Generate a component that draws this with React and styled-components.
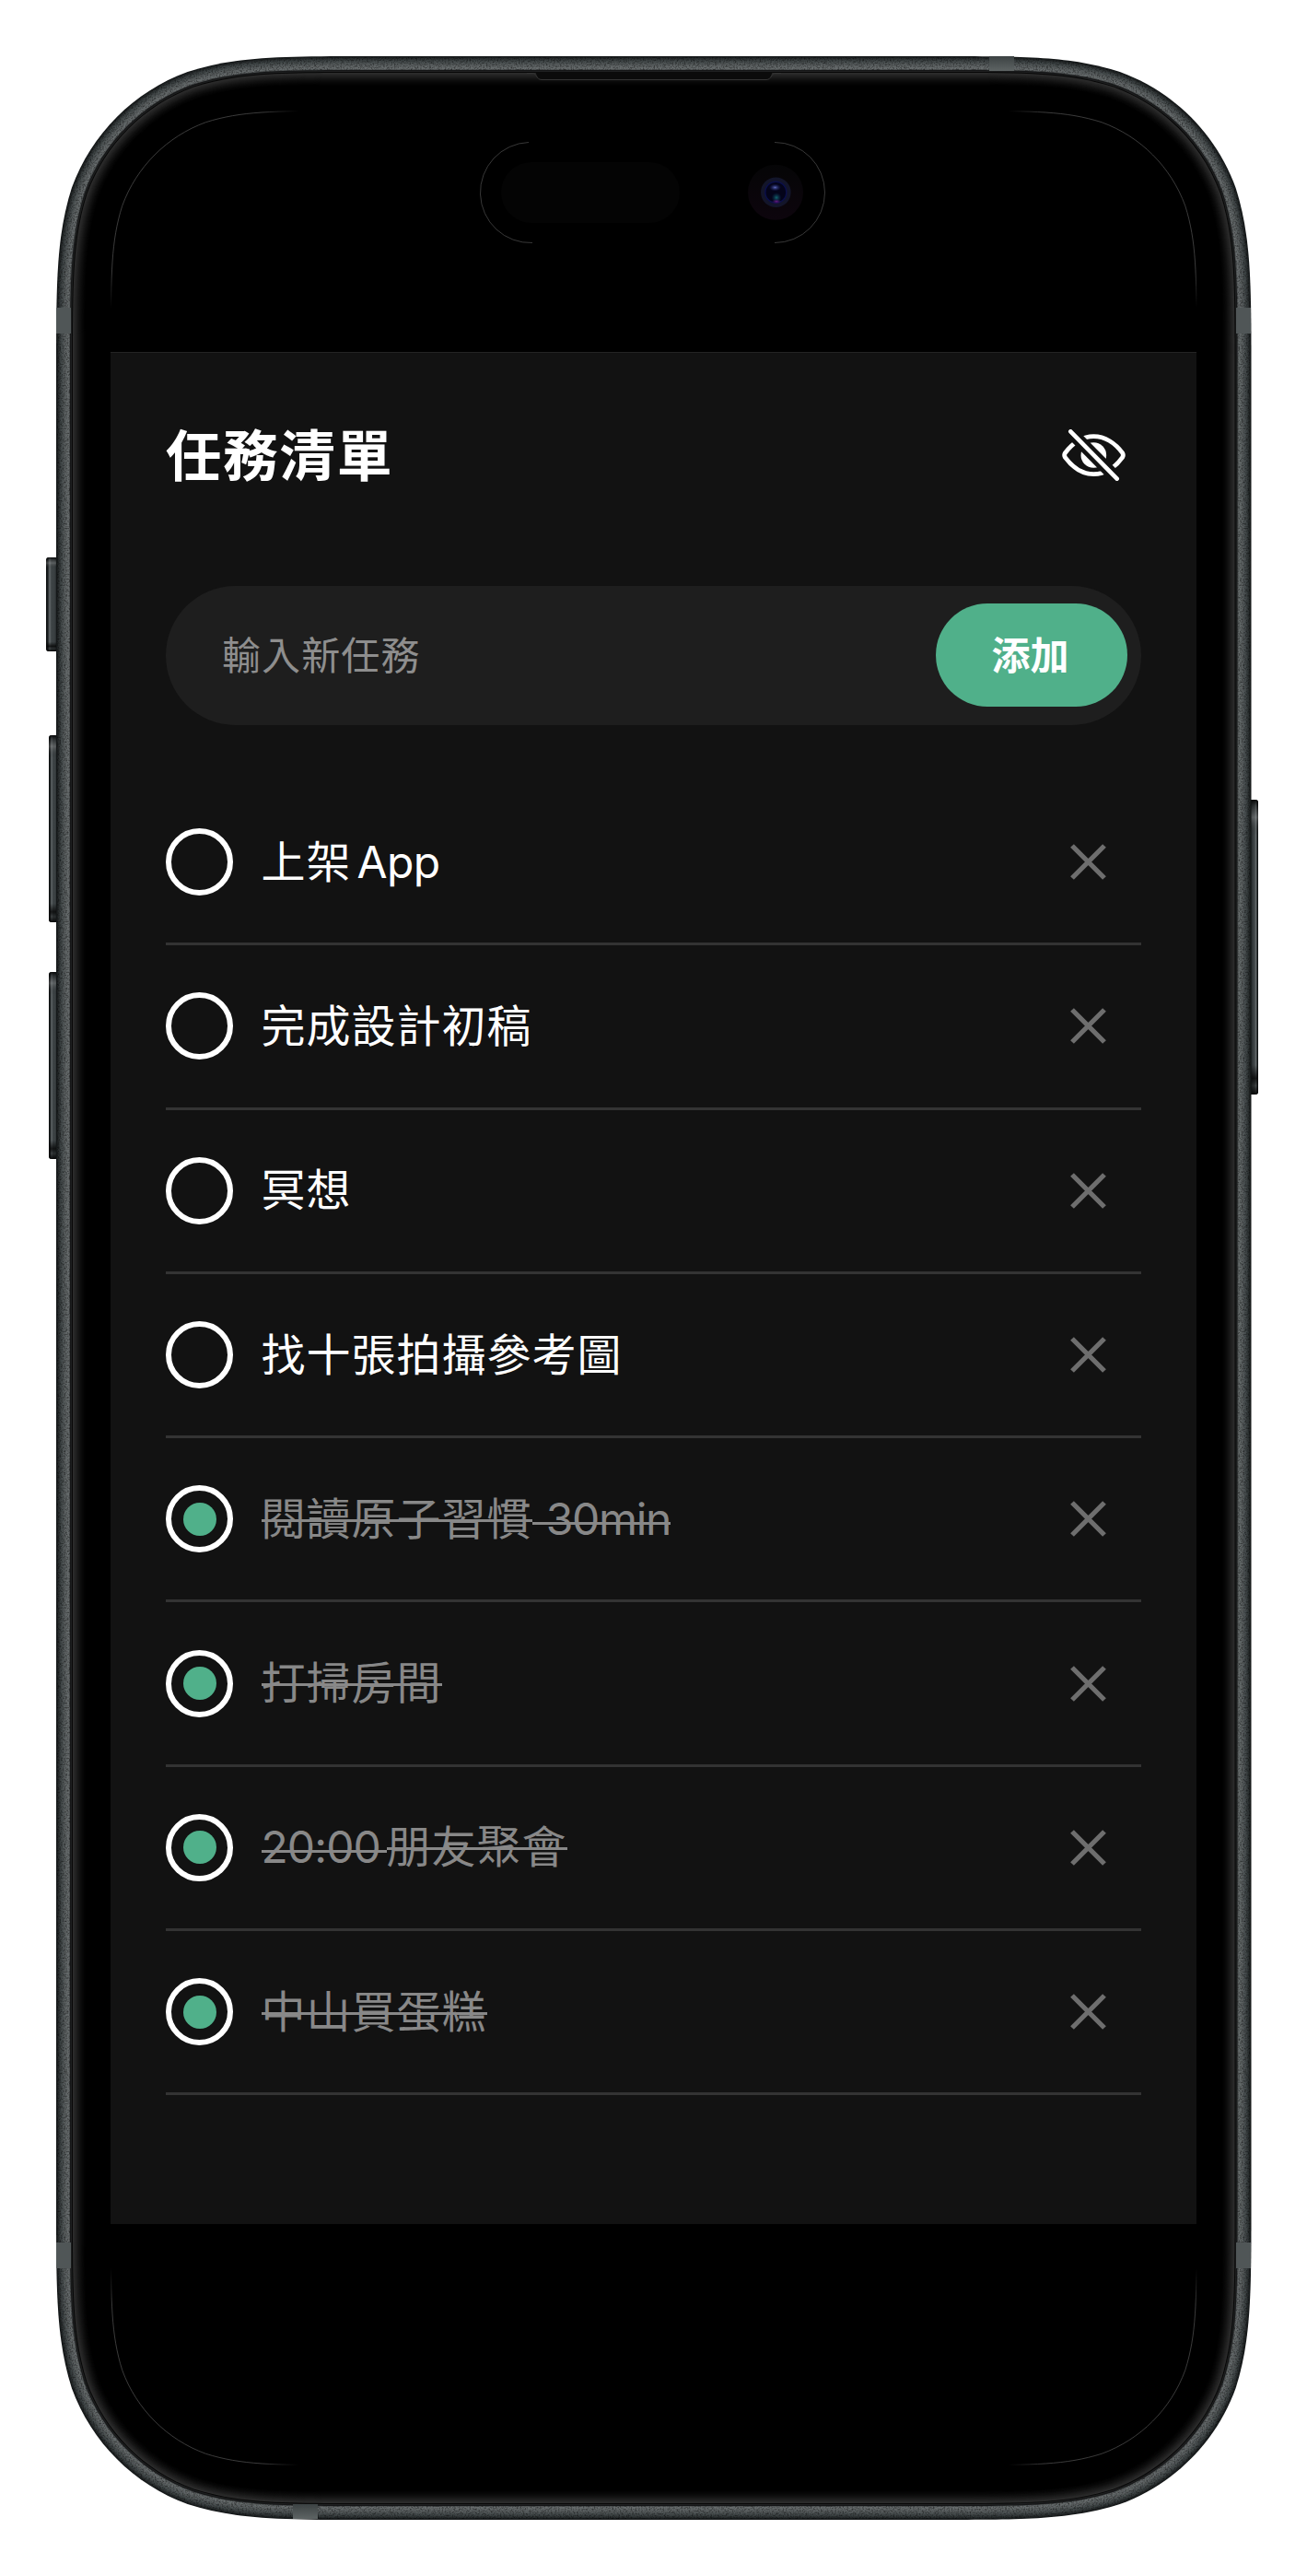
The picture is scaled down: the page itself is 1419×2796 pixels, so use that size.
import React, { useState } from "react";
import styled, { createGlobalStyle } from "styled-components";

const GlobalStyle = createGlobalStyle`
  *, *::before, *::after { box-sizing: border-box; }
  body { margin: 0; background: #fff; }
`;

const cjk = `"Noto Sans CJK TC", "Noto Sans CJK SC", sans-serif`;

/* ---------- page ---------- */

const Page = styled.main`
  position: relative;
  width: 1419px;
  height: 2796px;
  padding: 382px 120px;
  overflow: hidden;
  background: #fff;
  font-family: Inter, ${cjk};
`;

const DeviceArt = styled.svg`
  position: absolute;
  inset: 0;
  display: block;
`;

const Screen = styled.section`
  position: relative;
  display: flex;
  flex-direction: column;
  width: 1179px;
  height: 2032px;
  padding: 0 60px;
  background: #121212;
  box-shadow: inset 0 1px 0 #242424;
`;

const Header = styled.header`
  display: flex;
  align-items: center;
  justify-content: space-between;
  height: 224px;
  margin-bottom: 30px;
  padding-right: 17px;
`;

const Title = styled.h1`
  margin: 0;
  padding-bottom: 6px;
  font: 600 60px/88px ${cjk};
  letter-spacing: 1.9px;
  color: #fff;
`;

const IconButton = styled.button`
  display: flex;
  padding: 0;
  border: 0;
  background: none;
  cursor: pointer;
`;

const Composer = styled.div`
  display: flex;
  align-items: center;
  justify-content: space-between;
  height: 151px;
  margin-bottom: 61px;
  padding: 0 15px 0 61px;
  border-radius: 76px;
  background: #1e1e1e;
`;

const Placeholder = styled.span`
  padding-bottom: 5px;
  font: 400 42px/60px ${cjk};
  letter-spacing: 1.1px;
  color: #8e8e8e;
`;

const AddButton = styled.button`
  width: 208px;
  height: 112px;
  margin-bottom: 1px;
  padding: 0 3px 5px 0;
  border: 0;
  border-radius: 56px;
  background: #50b08a;
  color: #fff;
  font: 600 42px/60px ${cjk};
  cursor: pointer;
`;

const List = styled.ul`
  margin: 0;
  padding: 0;
  list-style: none;
`;

const Row = styled.li`
  display: flex;
  align-items: center;
  height: 178.3px;
  padding-right: 38px;
  border-bottom: 3px solid #333;
`;

const Radio = styled.button`
  display: flex;
  align-items: center;
  justify-content: center;
  width: 73px;
  height: 73px;
  padding: 0;
  border: 6px solid #fff;
  border-radius: 50%;
  background: none;
  cursor: pointer;
`;

const Dot = styled.span`
  width: 36px;
  height: 36px;
  border-radius: 50%;
  background: #50b08a;
`;

const Label = styled.span`
  flex: 1;
  margin-left: 30.5px;
  padding-bottom: 4px;
  line-height: 70px;
  font-size: 48px;
  white-space: pre;
  color: ${(p) => (p.$done ? "#888" : "#fff")};
`;

const Run = styled.span`
  position: relative;
  font-family: ${(p) => (p.$latin ? `Inter, ${cjk}` : cjk)};
  letter-spacing: ${(p) => p.$tracking ?? 1}px;
  word-spacing: ${(p) => p.$gap ?? 0}px;
`;

const StruckRun = styled(Run)`
  &::after {
    content: "";
    position: absolute;
    left: 0;
    right: 0;
    bottom: ${(p) => (p.$latin ? "23px" : "28px")};
    height: 3px;
    background: #888;
  }
`;

/* ---------- icons ---------- */

const EyeOff = () => (
  <svg width="69" height="56" viewBox="398 1247 207 168" fill="none">
    <mask id="eyeGap" maskUnits="userSpaceOnUse" x="390" y="1240" width="225" height="190">
      <rect x="390" y="1240" width="225" height="190" fill="#fff" />
      <path d="M386 1215L626 1457" stroke="#000" strokeWidth="41" />
    </mask>
    <g mask="url(#eyeGap)">
      <path
        d="M408 1324C432 1293 464 1270 501 1270C538 1270 572 1293 595 1324Q599 1331 595 1338C572 1370 538 1393 501 1393C464 1393 432 1370 408 1338Q404 1331 408 1324Z"
        stroke="#fff"
        strokeWidth="14.5"
      />
      <circle cx="501" cy="1331" r="41.5" fill="#fff" />
    </g>
    <path d="M426 1254L577 1408" stroke="#fff" strokeWidth="14" strokeLinecap="round" />
  </svg>
);

const Cross = () => (
  <svg width="39" height="39" viewBox="0 0 39 39" stroke="#6e6e6e" strokeWidth="5.3">
    <path d="M2 2L37 37M37 2L2 37" />
  </svg>
);

/* ---------- device ---------- */

const W = 1297.5;
const H = 2674;

// Rounded rectangle with continuous curvature, inset from the outer body edge.
const body = (inset, radius = 226 - inset) => {
  const x0 = 61 + inset;
  const y0 = 61 + inset;
  const x1 = 61 + W - inset;
  const y1 = 61 + H - inset;
  const [a, b, c, d, e, f, g] = [1.528665, 1.08849, 0.868407, 0.631494, 0.372824, 0.16906, 0.074911].map(
    (k) => k * radius
  );
  return [
    `M${x0 + a} ${y0}L${x1 - a} ${y0}`,
    `C${x1 - b} ${y0} ${x1 - c} ${y0} ${x1 - d} ${y0 + g}`,
    `C${x1 - e} ${y0 + f} ${x1 - f} ${y0 + e} ${x1 - g} ${y0 + d}`,
    `C${x1} ${y0 + c} ${x1} ${y0 + b} ${x1} ${y0 + a}L${x1} ${y1 - a}`,
    `C${x1} ${y1 - b} ${x1} ${y1 - c} ${x1 - g} ${y1 - d}`,
    `C${x1 - f} ${y1 - e} ${x1 - e} ${y1 - f} ${x1 - d} ${y1 - g}`,
    `C${x1 - c} ${y1} ${x1 - b} ${y1} ${x1 - a} ${y1}L${x0 + a} ${y1}`,
    `C${x0 + b} ${y1} ${x0 + c} ${y1} ${x0 + d} ${y1 - g}`,
    `C${x0 + e} ${y1 - f} ${x0 + f} ${y1 - e} ${x0 + g} ${y1 - d}`,
    `C${x0} ${y1 - c} ${x0} ${y1 - b} ${x0} ${y1 - a}L${x0} ${y0 + a}`,
    `C${x0} ${y0 + b} ${x0} ${y0 + c} ${x0 + g} ${y0 + d}`,
    `C${x0 + f} ${y0 + e} ${x0 + e} ${y0 + f} ${x0 + d} ${y0 + g}`,
    `C${x0 + c} ${y0} ${x0 + b} ${y0} ${x0 + a} ${y0}Z`,
  ].join("");
};

const rail = [
  "#151819", "#1e2223", "#282c2d", "#313637", "#393f40", "#404647", "#474d4e", "#4d5354",
  "#535859", "#585d5e", "#5d6263", "#616667", "#656a6b", "#676c6d", "#505455", "#151617",
  "#1f2021", "#070707",
];
const glow = [
  "#2c2c2c", "#282828", "#242424", "#202020", "#1c1c1c", "#181818", "#141414", "#101010",
  "#0d0d0d", "#0a0a0a", "#070707", "#050505", "#030303", "#010101", "#000",
];

const bands = [
  [61, 334, 16, 28], [1342, 334, 16, 28], [61, 2434, 16, 28], [1342, 2434, 16, 28],
  [1074, 61, 27, 16], [318, 2718, 27, 16],
];

const sideKeys = [
  { x: 50, y: 605, w: 13, h: 102, side: "L" },
  { x: 53, y: 798, w: 10, h: 203, side: "L" },
  { x: 53, y: 1055, w: 10, h: 203, side: "L" },
  { x: 1356, y: 868, w: 10, h: 320, side: "R" },
];

const Device = () => (
  <DeviceArt width="1419" height="2796" viewBox="0 0 1419 2796" fill="none" aria-hidden="true">
    <defs>
      <filter id="grain" x="0" y="0" width="1419" height="2796" filterUnits="userSpaceOnUse">
        <feTurbulence type="fractalNoise" baseFrequency="0.6" numOctaves="2" seed="4" />
        <feColorMatrix values="0 0 0 0 0  0 0 0 0 0  0 0 0 0 0  1.2 0 0 0 -0.5" />
      </filter>
      <clipPath id="ring">
        <path clipRule="evenodd" d={body(1) + body(15)} />
      </clipPath>
      <linearGradient id="fadeX" gradientUnits="userSpaceOnUse" x1="0" x2="1419" y1="0" y2="0">
        <stop offset={285 / 1419} stopColor="#fff" />
        <stop offset={324 / 1419} stopColor="#000" />
        <stop offset={1095 / 1419} stopColor="#000" />
        <stop offset={1134 / 1419} stopColor="#fff" />
      </linearGradient>
      <linearGradient id="fadeY" gradientUnits="userSpaceOnUse" x1="0" x2="0" y1="0" y2="2796">
        <stop offset={295 / 2796} stopColor="#fff" />
        <stop offset={334 / 2796} stopColor="#000" />
        <stop offset={2462 / 2796} stopColor="#000" />
        <stop offset={2501 / 2796} stopColor="#fff" />
      </linearGradient>
      <mask id="maskX" maskUnits="userSpaceOnUse" x="0" y="0" width="1419" height="2796">
        <rect width="1419" height="2796" fill="url(#fadeX)" />
      </mask>
      <mask id="maskY" maskUnits="userSpaceOnUse" x="0" y="0" width="1419" height="2796">
        <rect width="1419" height="2796" fill="url(#fadeY)" />
      </mask>
      <linearGradient id="keyL">
        <stop offset="0" stopColor="#090b0b" />
        <stop offset=".15" stopColor="#1c2021" />
        <stop offset=".3" stopColor="#646a6c" />
        <stop offset=".45" stopColor="#3d4345" />
        <stop offset=".7" stopColor="#3a4042" />
        <stop offset="1" stopColor="#151819" />
      </linearGradient>
      <linearGradient id="keyR">
        <stop offset="0" stopColor="#151819" />
        <stop offset=".3" stopColor="#2b3032" />
        <stop offset=".65" stopColor="#474d4f" />
        <stop offset=".78" stopColor="#6c7274" />
        <stop offset=".88" stopColor="#1c2021" />
        <stop offset="1" stopColor="#090b0b" />
      </linearGradient>
      <linearGradient id="keyEnds" x2="0" y2="1">
        <stop offset="0" stopColor="#000" stopOpacity=".9" />
        <stop offset=".02" stopColor="#000" stopOpacity=".3" />
        <stop offset=".06" stopColor="#aaa" stopOpacity=".3" />
        <stop offset=".12" stopColor="#000" stopOpacity="0" />
        <stop offset=".9" stopColor="#000" stopOpacity="0" />
        <stop offset=".945" stopColor="#000" stopOpacity=".75" />
        <stop offset=".97" stopColor="#000" stopOpacity=".3" />
        <stop offset="1" stopColor="#000" stopOpacity=".9" />
      </linearGradient>
      <linearGradient id="bandV" x2="0" y2="1">
        <stop offset="0" stopColor="#3c4243" />
        <stop offset="1" stopColor="#5e6464" />
      </linearGradient>
      <linearGradient id="cam" x2="0" y2="1">
        <stop offset="0" stopColor="#050506" />
        <stop offset="1" stopColor="#0d050d" />
      </linearGradient>
      <radialGradient id="lensTop">
        <stop offset="0" stopColor="#5a66b8" />
        <stop offset="1" stopColor="#1a1f66" stopOpacity="0" />
      </radialGradient>
      <radialGradient id="lensLow">
        <stop offset="0" stopColor="#12666c" />
        <stop offset="1" stopColor="#0a2a50" stopOpacity="0" />
      </radialGradient>
      <radialGradient id="lensPink">
        <stop offset="0" stopColor="#6b1a86" />
        <stop offset="1" stopColor="#3a1060" stopOpacity="0" />
      </radialGradient>
    </defs>

    {sideKeys.map((k) => (
      <g key={k.y}>
        <rect x={k.x} y={k.y} width={k.w} height={k.h} rx="3" fill={`url(#key${k.side})`} />
        <rect x={k.x} y={k.y} width={k.w} height={k.h} rx="3" fill="url(#keyEnds)" />
      </g>
    ))}

    {rail.map((color, i) => (
      <path key={i} d={body(i)} fill={color} />
    ))}
    <rect x="0" y="0" width="1419" height="2796" filter="url(#grain)" clipPath="url(#ring)" />
    {glow.map((color, i) => (
      <path key={i} d={body(18 + i)} fill={color} />
    ))}
    {bands.map(([x, y, w, h]) => (
      <rect key={`${x}-${y}`} x={x} y={y} width={w} height={h} fill={w > h ? "url(#bandV)" : "#505657"} />
    ))}

    <path d="M580 78C583 78 582 86 588 86H832C838 86 837 78 840 78Z" fill="#0b0b0b" />
    <path d="M572 79.5H578C583 79.5 582 86.5 588 86.5H832C838 86.5 837 79.5 842 79.5H848" stroke="#333" />

    <g mask="url(#maskX)">
      <g mask="url(#maskY)">
        <path d={body(59.5, 163)} stroke="#555" strokeWidth=".7" />
      </g>
    </g>

    <path d="M574 154.5A54.5 54.5 0 0 0 578 263.5M841 154.5A54.5 54.5 0 0 1 841 263.5" stroke="#505050" strokeWidth=".7" />
    <rect x="544" y="176" width="194" height="66" rx="33" fill="#040404" />
    <circle cx="842" cy="208.7" r="30" fill="url(#cam)" />
    <circle cx="842.3" cy="208.7" r="16.3" fill="#13152a" />
    <circle cx="842.3" cy="208.7" r="11.5" fill="#04041a" stroke="#0b0f4a" strokeWidth="1.5" />
    <ellipse cx="841.5" cy="203.5" rx="6.5" ry="4" fill="url(#lensTop)" />
    <circle cx="843" cy="214.5" r="5.5" fill="url(#lensLow)" />
    <ellipse cx="843" cy="218.7" rx="5" ry="2.6" fill="url(#lensPink)" />
  </DeviceArt>
);

/* ---------- app ---------- */

const initialTasks = [
  { id: 1, runs: [{ text: "上架" }, { text: " App", tracking: -0.6, gap: -7 }], done: false },
  { id: 2, runs: [{ text: "完成設計初稿" }], done: false },
  { id: 3, runs: [{ text: "冥想" }], done: false },
  { id: 4, runs: [{ text: "找十張拍攝參考圖" }], done: false },
  { id: 5, runs: [{ text: "閱讀原子習慣" }, { text: " 30min", tracking: -1.3, gap: 3 }], done: true },
  { id: 6, runs: [{ text: "打掃房間" }], done: true },
  { id: 7, runs: [{ text: "20:00 ", tracking: -0.9, gap: -6 }, { text: "朋友聚會" }], done: true },
  { id: 8, runs: [{ text: "中山買蛋糕" }], done: true },
];

const isLatin = (text) => /[A-Za-z0-9]/.test(text);

export default function App() {
  const [tasks, setTasks] = useState(initialTasks);
  const toggle = (id) => setTasks(tasks.map((t) => (t.id === id ? { ...t, done: !t.done } : t)));
  const remove = (id) => setTasks(tasks.filter((t) => t.id !== id));

  return (
    <Page>
      <GlobalStyle />
      <Device />
      <Screen>
        <Header>
          <Title>任務清單</Title>
          <IconButton>
            <EyeOff />
          </IconButton>
        </Header>
        <Composer>
          <Placeholder>輸入新任務</Placeholder>
          <AddButton>添加</AddButton>
        </Composer>
        <List>
          {tasks.map(({ id, runs, done }) => {
            const Part = done ? StruckRun : Run;
            return (
              <Row key={id}>
                <Radio onClick={() => toggle(id)}>{done && <Dot />}</Radio>
                <Label $done={done}>
                  {runs.map(({ text, tracking, gap }) => (
                    <Part key={text} $latin={isLatin(text)} $tracking={tracking} $gap={gap}>
                      {text}
                    </Part>
                  ))}
                </Label>
                <IconButton onClick={() => remove(id)}>
                  <Cross />
                </IconButton>
              </Row>
            );
          })}
        </List>
      </Screen>
    </Page>
  );
}
